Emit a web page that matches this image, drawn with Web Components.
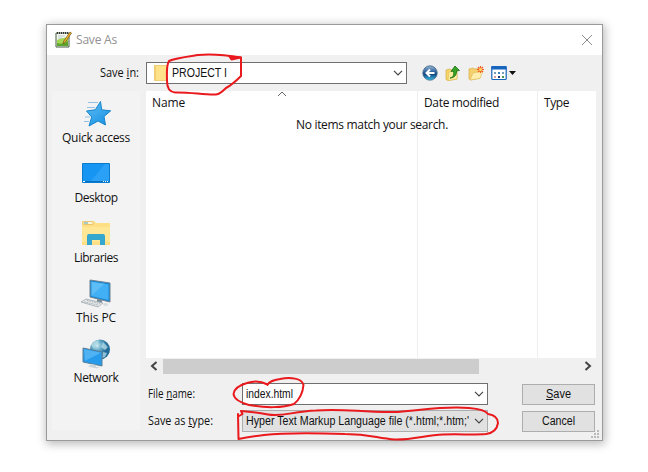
<!DOCTYPE html>
<html lang="en"><head><meta charset="utf-8"><title>Save As</title>
<style>html,body{margin:0;height:100%;background:#fff;overflow:hidden}body{padding:24px 0 0 46px;box-sizing:border-box;font:12px "Open Sans","Noto Sans",sans-serif;color:#111}</style></head><body>
<save-dialog></save-dialog>
<script>
const define=(name,html,ready)=>customElements.define(name,class extends HTMLElement{
  constructor(){super();this.attachShadow({mode:'open'}).innerHTML=html;}
  connectedCallback(){if(ready)ready.call(this,this.shadowRoot);}
});

// A single line fitted to the width in its "w" attribute: by tracking, or with "squeeze" by condensing the glyphs.
define('fit-text','<style>:host{display:inline-block;white-space:pre;line-height:16px}span{display:inline-block;transform-origin:0 50%}</style><span><slot></slot></span>',function(root){
  const s=root.querySelector('span');
  const w=+this.getAttribute('w'), n=this.textContent.length, now=s.getBoundingClientRect().width;
  if(this.hasAttribute('squeeze')){this.style.width=w+'px';s.style.transform=`scaleX(${w/now})`;}
  else s.style.letterSpacing=((w-now)/n)+'px';
});

const icons={
app:['0 0 17 17','<path d="M1 2h13v14H1z" fill="#f6f9ee" stroke="#455a45"/><path d="M2 9q5-3 11-2v8H2z" fill="#a4d653"/><path d="M2 12q6 2 11-2v5H2z" fill="#5aa52a"/><path d="M2 2h11" stroke="#333" stroke-width="2" stroke-dasharray="1 1"/><path d="M3 5h7M3 7h4" stroke="#b9c9c9"/><path d="M15 1l1.500 1-6 9-2.500 2 .8-3z" fill="#efb622" stroke="#70501a" stroke-width=".7"/>'],
back:['0 0 16 16','<defs><linearGradient id="g" x2="0" y2="1"><stop stop-color="#9ab8d5"/><stop offset=".45" stop-color="#255c9b"/><stop offset=".6" stop-color="#164a82"/><stop offset="1" stop-color="#35c4ee"/></linearGradient></defs><circle cx="8" cy="8" r="7.200" fill="url(#g)" stroke="#3d6382" stroke-width=".8"/><path d="M12.500 8H4.500M8 4.500L4.500 8 8 11.500" fill="none" stroke="#fff" stroke-width="2"/>'],
up:['0 0 16 16','<path d="M1 5l4-1 1 1 6-1v10l-9 1.500-2-1z" fill="#f5d56b" stroke="#d5ad41" stroke-width=".7"/><path d="M4 7l8-2v9l-9 1.500z" fill="#ffec9e" stroke="#ddb84c" stroke-width=".5"/><path d="M5 13c4-1 4-4 3.500-7L6 6.500 10 1l4.500 4.500-3 .3C12 10 9 13 5 13z" fill="#36a526" stroke="#176b15" stroke-width=".8"/>'],
fresh:['0 0 16 16','<path d="M1 4l4-1 1 1 6-.5V13l-9 2-2-1z" fill="#f4d16e" stroke="#d7ad45" stroke-width=".7"/><path d="M5 8l10-2-3 7.500L2 15z" fill="#ffedac" stroke="#dfba57" stroke-width=".6"/><path d="M12.500 1v7M9 4.500h7M10 2l5 5M15 2l-5 5" stroke="#f15a24" stroke-width="1.200"/><circle cx="12.500" cy="4.500" r="1.500" fill="#ffda66"/>'],
view:['0 0 26 16','<rect x=".8" y="1.500" width="14.400" height="13" rx="1" fill="#fff" stroke="#1765bd" stroke-width="1.200"/><path d="M.5 1h15v3.500H.5z" fill="#1765bd"/><path d="M3 7h2v2H3zM11 7h2v2h-2z" fill="#789db8"/><path d="M7 7h2v2H7z" fill="#3a83bd"/><path d="M3 11h2v2H3z" fill="#d79a98"/><path d="M7 11h2v2H7z" fill="#26366d"/><path d="M11 11h2v2h-2z" fill="#4b9350"/><path d="M18 6h7l-3.500 4z" fill="#111"/>'],
star:['0 0 32 32','<defs><linearGradient id="g" x2=".7" y2="1"><stop stop-color="#62bff5"/><stop offset="1" stop-color="#1b93e4"/></linearGradient></defs><path d="M20.500 4.500l1.200 8.300 9 1-6.700 5.700 1.500 8.500-7.500-4-9 5 2.700-9-5.200-6 8.800-1.200z" fill="url(#g)" stroke="#1585cb" stroke-width="1"/><path d="M8 5.500h10M7 10.500h8M5 20h5M4 24.500h5" stroke="#93c3e4"/>'],
desktop:['0 0 32 32','<g transform="translate(0 -1)"><path d="M2.500 7.500h27v19h-27z" fill="#1696f2" stroke="#087bcf"/><path d="M10 26L25 8h4v17z" fill="#38a9fa" opacity=".6"/><path d="M3 25.500h26" stroke="#0872bf"/><path d="M3 25.500h2M23 25.500h1M25 25.500h1M27 25.500h1" stroke="#fff"/></g>'],
libs:['0 0 32 32','<path d="M2 4h12l2 2h14v22H2z" fill="#ffdf83"/><path d="M2 10h28v15H2z" fill="#ffe795"/><rect x="3" y="4.500" width="10" height="3" rx="1" fill="#fff6d8" stroke="#d7aa48" stroke-width=".6"/><path d="M4 6h4" stroke="#4fa3b2"/><path d="M7 28V19q0-2 2-2h14q2 0 2 2v9h-5v-5h-8v5z" fill="#35a6ce"/>'],
pc:['0 0 32 32','<path d="M10 3l20 3v19l-20-5z" fill="#1689d7" stroke="#6f8291"/><path d="M11.500 4.700l17 2.700v15.500l-17-4z" fill="#42b0f5"/><path d="M11.500 4.700l13 2-13 12z" fill="#78caf8" opacity=".5"/><path d="M17 22l5 1v3h-5z" fill="#7c8b93"/><path d="M1 25l5-3 17 4-5 4z" fill="#e3e7e9" stroke="#a0a9ae" stroke-width=".8"/><path d="M4 25l14 3M7 23.500l13 3" stroke="#a9b2b7" stroke-dasharray="1.500 1"/><path d="M24 26l4 .5v2l-3 .5-2-1z" fill="#d5dbde"/>'],
net:['0 0 32 32','<defs><radialGradient id="g" cx=".35" cy=".3"><stop stop-color="#d2edf4"/><stop offset=".5" stop-color="#65abc7"/><stop offset="1" stop-color="#236c9a"/></radialGradient></defs><circle cx="20" cy="12.500" r="10" fill="url(#g)"/><path d="M11 8l4-4 4-1-1 4-3 2-1 3zM23 5l5 5-3 3-4-3zM23 15l4 1-2 4-3 1z" fill="#b5dce5" opacity=".75"/><path d="M3 11l19 4v14L3 25z" fill="#279beb" stroke="#5b7e97"/><path d="M4 12.300l17 3.500-16 8z" fill="#65bef8" opacity=".65"/><path d="M12 27l4 1v2h4l-3 1.500-9-2z" fill="#cbd4d9"/>'],
close:['0 0 12 12','<path d="M1 1l10 10M11 1L1 11" stroke="#8a8a8a" fill="none"/>'],
down:['0 0 10 6','<path d="M1 .8l4 4 4-4" stroke="#444" fill="none" stroke-width="1.200"/>'],
sort:['0 0 10 6','<path d="M1 5l4-4 4 4" stroke="#666" fill="none"/>'],
left:['0 0 8 10','<path d="M6.500 1L2 5l4.500 4" stroke="#444" fill="none" stroke-width="2"/>'],
right:['0 0 8 10','<path d="M1.500 1L6 5 1.500 9" stroke="#444" fill="none" stroke-width="2"/>'],
folder:['0 0 13 16','<path d="M0 0h13v16H0z" fill="#ffe28a"/><path d="M0 0h2v16H0z" fill="#f3ce70"/><path d="M.5.5h12v15H.5z" fill="none" stroke="#efcf79"/>'],
grip:['0 0 9 9','<path d="M6 0h2v2H6zM3 3h2v2H3zM6 3h2v2H6zM0 6h2v2H0zM3 6h2v2H3zM6 6h2v2H6z" fill="#bbb"/>']};
define('ui-icon','<style>:host{display:block;flex:none}div,svg{display:block;width:100%;height:100%}</style><div></div>',function(root){
  const i=icons[this.getAttribute('name')];
  if(i)root.querySelector('div').innerHTML=`<svg viewBox="${i[0]}">${i[1]}</svg>`;
});

define('title-bar',`<style>:host{display:flex;height:30px;background:#fff;align-items:center;padding:0 9px 0 8px;box-sizing:border-box;color:#929292}.i{width:17px;height:17px;margin-right:4px;margin-top:-2px}.x{width:12px;height:12px;margin-left:auto;margin-top:-1px}</style><ui-icon class="i" name="app"></ui-icon><fit-text w="41">Save As</fit-text><ui-icon class="x" name="close"></ui-icon>`);

define('combo-box',`<style>:host{display:flex;align-items:center;box-sizing:border-box;border:1px solid #707070;background:#fff;height:22px;padding:0 3px;font:12px "Liberation Sans",sans-serif;overflow:hidden}:host([flat]){background:#e1e1e1;border-color:#adadad}.c{width:10px;height:6px;margin-left:auto}</style><slot></slot><ui-icon class="c" name="down"></ui-icon>`);

define('push-button',`<style>:host{display:flex;align-items:center;justify-content:center;box-sizing:border-box;width:73px;height:21px;background:#e1e1e1;border:1px solid #adadad;font:12px "Liberation Sans",sans-serif}</style><slot></slot>`);

define('place-item',`<style>:host{display:flex;flex-direction:column;align-items:center;height:60px}ui-icon{width:32px;height:32px}div{margin-bottom:1px}</style><div></div><slot></slot>`,function(r){
  r.querySelector('div').innerHTML=`<ui-icon name="${this.getAttribute('icon')}"></ui-icon>`;
});

define('places-bar',`<style>:host{display:block;background:#f3f3f3;padding-top:6px;box-sizing:border-box}</style>
<place-item icon="star"><fit-text w="68">Quick access</fit-text></place-item>
<place-item icon="desktop"><fit-text w="43">Desktop</fit-text></place-item>
<place-item icon="libs"><fit-text w="44">Libraries</fit-text></place-item>
<place-item icon="pc"><fit-text w="40">This PC</fit-text></place-item>
<place-item icon="net"><fit-text w="45">Network</fit-text></place-item>`);

define('file-list',`<style>:host{display:grid;grid-template-rows:267px 16px;background:#fff}
.cols{display:grid;grid-template-columns:272px 120px 1fr;grid-template-rows:267px}
.cols>div{border-right:1px solid #eee;padding:3px 0 0 6px;box-sizing:border-box}.cols>div:last-child{border:0}
.empty{position:absolute;left:296px;top:117px}.sort{position:absolute;left:277px;top:91px;width:10px;height:6px}
.bar{display:flex;background:#f0f0f0;align-items:center;justify-content:space-between;padding:0 4px}.bar ui-icon{width:8px;height:10px}.thumb{width:316px;height:15px;background:#cdcdcd;margin:0 auto 0 5px}</style>
<div class="cols"><div><fit-text w="33">Name</fit-text></div><div><fit-text w="75">Date modified</fit-text></div><div><fit-text w="25">Type</fit-text></div></div>
<div class="bar"><ui-icon name="left"></ui-icon><div class="thumb"></div><ui-icon name="right"></ui-icon></div>
<fit-text class="empty" w="152">No items match your search.</fit-text><ui-icon class="sort" name="sort"></ui-icon>`);

define('red-marks',`<style>:host{position:absolute;inset:0;pointer-events:none}svg{display:block}</style><svg width="648" height="472" fill="none" stroke="#e9191d" stroke-width="2" stroke-linecap="round" stroke-linejoin="round">
<path d="M241 57.500C226 55 212 53.500 198 55C188 56.500 175 58 169 61C166 66 167 74 167 81C167 88 169 92 175 92.500C190 92 204 95 216 94.500C220 94 223 91 226 88C232 85 238 79 241 76V58"/><path d="M229.500 56.500l11 1-9 2z" fill="#e9191d"/>
<path d="M267.500 384.500C261 381 254 380.500 247 383C240 385 234 389 233.500 394C234 399 242 403 249 405C265 408 283 408 294 404C300 399 303 391 303.500 385C302 378 290 377 280 379C274 380 269 381 267.500 385"/>
<path d="M239 416L242.500 414L241 411Q254 412 268 414.500C283 417 292 411.500 316 410.500C344 408 363 413 398 412C425 410 442 406 469 408C481 409 486 411 488 414C494 415 498 418 498 423C497 430 493 433 486 434C474 435 462 434 443 434.500C426 435 413 440 395 439.500C376 438 370 434 345 434C312 433 282 433 264 435Q248 437 238.500 439L238 414"/>
</svg>`);

define('save-dialog',`<style>:host{display:block;width:557px;height:417px;box-sizing:border-box;border:1px solid #9a9a9a;background:#f0f0f0;box-shadow:1px 2px 9px 1px rgba(0,0,0,.28)}
.top{display:flex;height:36px;align-items:center;box-sizing:border-box;padding:0 0 0 53px}.top combo-box{width:261px;margin-left:7px}.tools{display:flex;gap:7px;margin-left:15px}.tools ui-icon{width:16px;height:16px}.tools .v{width:26px}
.top ui-icon.f{width:13px;height:16px;margin:0 5px 0 4px}
.main{display:grid;grid-template-columns:88px 450px;column-gap:6px;padding-left:5px}
places-bar{height:339px}
.form{display:grid;grid-template-columns:94px 246px 107px;row-gap:5px;padding:9px 0 0 2px;align-items:center}.form push-button{margin-left:34px}
.grip{position:absolute;left:591px;top:430px;width:9px;height:9px}</style>
<title-bar></title-bar>
<div class="top"><fit-text squeeze w="39">Save <u>i</u>n:</fit-text><combo-box><ui-icon class="f" name="folder"></ui-icon><fit-text squeeze w="55">PROJECT I</fit-text></combo-box>
<div class="tools"><ui-icon name="back"></ui-icon><ui-icon name="up"></ui-icon><ui-icon name="fresh"></ui-icon><ui-icon class="v" name="view"></ui-icon></div></div>
<div class="main"><places-bar></places-bar><div><file-list></file-list>
<div class="form"><fit-text squeeze w="47">File <u>n</u>ame:</fit-text><combo-box><fit-text squeeze w="47">index.html</fit-text></combo-box><push-button><fit-text squeeze w="25"><u>S</u>ave</fit-text></push-button>
<fit-text squeeze w="65">Save as <u>t</u>ype:</fit-text><combo-box flat><fit-text squeeze w="223">Hyper Text Markup Language file (*.html;*.htm;'</fit-text></combo-box><push-button><fit-text squeeze w="33">Cancel</fit-text></push-button></div></div></div>
<ui-icon class="grip" name="grip"></ui-icon><red-marks></red-marks>`);
</script></body></html>
